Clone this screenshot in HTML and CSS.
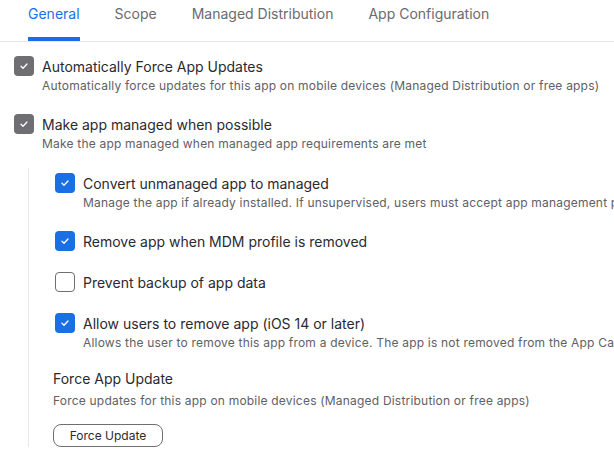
FILE: index.html
```html
<!DOCTYPE html>
<html>
<head>
<meta charset="utf-8">
<link rel="stylesheet" href="styles.css">
</head>
<body>
<nav class="tabs">
  <div class="tab active">General</div>
  <div class="tab">Scope</div>
  <div class="tab">Managed Distribution</div>
  <div class="tab">App Configuration</div>
</nav>
<main class="content">
  <div class="option">
    <span class="box gray"><svg viewBox="0 0 20 20"><path d="M7 10.3 L9 12.3 L13 8" /></svg></span>
    <div class="text">
      <div class="label">Automatically Force App Updates</div>
      <div class="desc">Automatically force updates for this app on mobile devices (Managed Distribution or free apps)</div>
    </div>
  </div>
  <div class="option">
    <span class="box gray"><svg viewBox="0 0 20 20"><path d="M7 10.3 L9 12.3 L13 8" /></svg></span>
    <div class="text">
      <div class="label">Make app managed when possible</div>
      <div class="desc">Make the app managed when managed app requirements are met</div>
    </div>
  </div>
  <section class="nested">
    <div class="option">
      <span class="box blue"><svg viewBox="0 0 20 20"><path d="M7 10.3 L9 12.3 L13 8" /></svg></span>
      <div class="text">
        <div class="label">Convert unmanaged app to managed</div>
        <div class="desc">Manage the app if already installed. If unsupervised, users must accept app management prompt</div>
      </div>
    </div>
    <div class="option">
      <span class="box blue"><svg viewBox="0 0 20 20"><path d="M7 10.3 L9 12.3 L13 8" /></svg></span>
      <div class="text">
        <div class="label">Remove app when MDM profile is removed</div>
      </div>
    </div>
    <div class="option">
      <span class="box empty"></span>
      <div class="text">
        <div class="label">Prevent backup of app data</div>
      </div>
    </div>
    <div class="option">
      <span class="box blue"><svg viewBox="0 0 20 20"><path d="M7 10.3 L9 12.3 L13 8" /></svg></span>
      <div class="text">
        <div class="label">Allow users to remove app (iOS 14 or later)</div>
        <div class="desc">Allows the user to remove this app from a device. The app is not removed from the App Catalog</div>
      </div>
    </div>
    <div class="force">
      <div class="label">Force App Update</div>
      <div class="desc">Force updates for this app on mobile devices (Managed Distribution or free apps)</div>
      <button class="btn">Force Update</button>
    </div>
  </section>
</main>
</body>
</html>
```

FILE: styles.css
```css
html, body {
  margin: 0;
  padding: 0;
  background: #ffffff;
  overflow: hidden;
}
body {
  font-family: Inter, "Noto Sans", sans-serif;
  color: #2a2a2e;
  width: 614px;
  height: 463px;
}
.tabs {
  display: flex;
  gap: 35px;
  padding-left: 28px;
  border-bottom: 1px solid #e6e6e8;
  white-space: nowrap;
}
.tab {
  font-size: 14px;
  line-height: 20px;
  padding-top: 4px;
  height: 33px;
  color: #6a6a70;
  border-bottom: 4px solid transparent;
}
.tab.active {
  color: #1b6fe5;
  border-bottom-color: #1b6fe5;
}
.content {
  padding: 14px 0 0 14px;
  display: flex;
  flex-direction: column;
  gap: 20px;
}
.option {
  display: flex;
  gap: 8px;
  align-items: flex-start;
  white-space: nowrap;
}
.box {
  flex: none;
  width: 20px;
  height: 20px;
  box-sizing: border-box;
  border-radius: 4px;
  display: flex;
}
.box svg {
  width: 20px;
  height: 20px;
  fill: none;
  stroke: #ffffff;
  stroke-width: 1.3;
  stroke-linecap: round;
  stroke-linejoin: round;
}
.box.gray { background: #6e6e73; }
.box.blue { background: #1b6fe5; }
.box.empty { border: 1px solid #6e6e73; background: #fff; }
.label {
  font-size: 14px;
  line-height: 21px;
  color: #2a2a2e;
}
.desc {
  font-size: 12px;
  line-height: 17px;
  color: #606066;
  letter-spacing: 0.2px;
}
.nested {
  margin-left: 14px;
  margin-top: -4px;
  padding: 5px 0 0 26px;
  border-left: 1px solid #e8e8ea;
  display: flex;
  flex-direction: column;
  gap: 20px;
}
.force {
  margin-top: -3px;
  margin-left: -2px;
  display: flex;
  flex-direction: column;
  align-items: flex-start;
  white-space: nowrap;
}
.force .desc {
  margin-top: 3px;
}
.btn {
  margin-top: 15px;
  font-family: Inter, "Noto Sans", sans-serif;
  font-size: 12px;
  color: #2a2a2e;
  background: #fff;
  border: 1px solid #6e6e73;
  border-radius: 8px;
  width: 110px;
  height: 23px;
  padding: 0;
}
```
